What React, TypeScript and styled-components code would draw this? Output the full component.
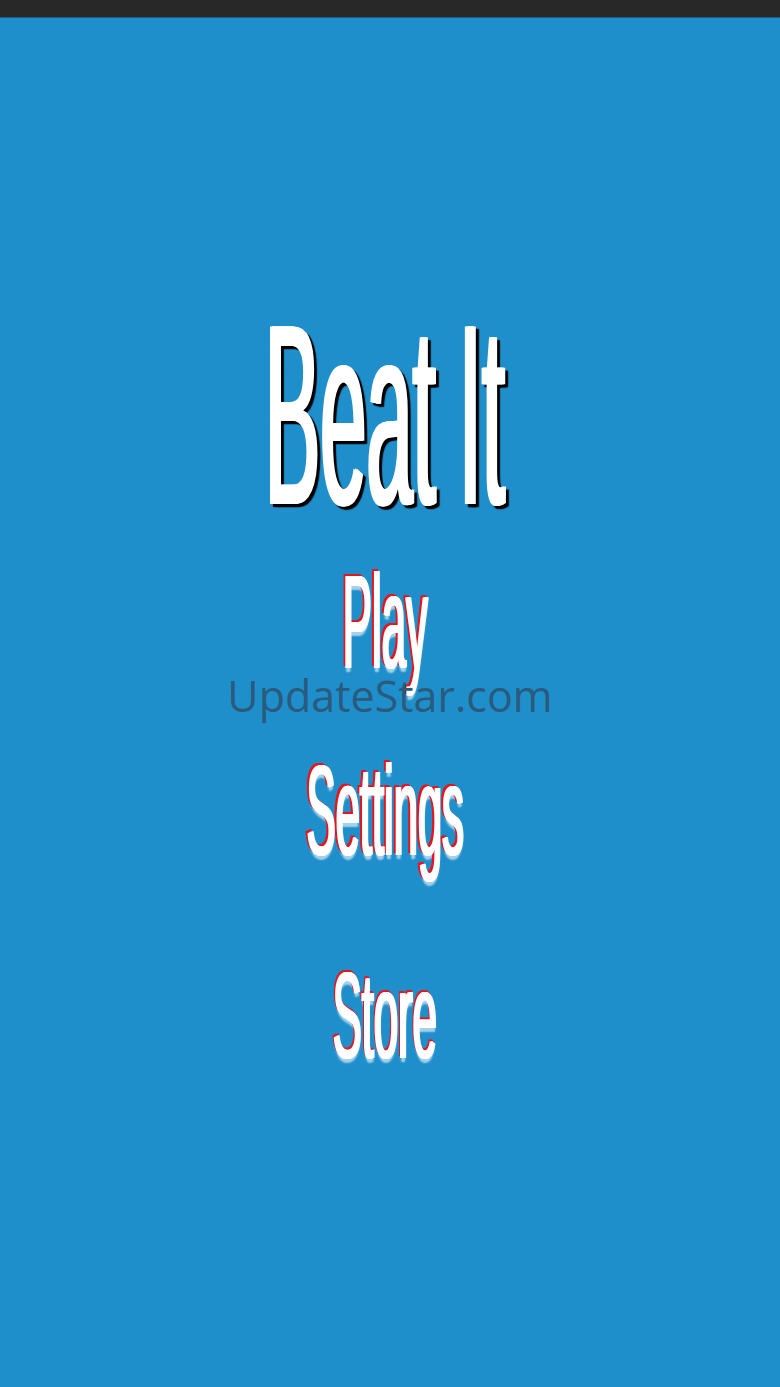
import React, { FC } from "react";
import styled, { createGlobalStyle } from "styled-components";

const GlobalStyle = createGlobalStyle`
  html, body {
    margin: 0;
    padding: 0;
    background: #1f8fcc;
    overflow: hidden;
  }
`;

const menu = [
  { label: "Play", fs: 134, sx: 0.326, mt: 11, shadowX: -6 },
  { label: "Settings", fs: 128, sx: 0.34, mt: 58, shadowX: -6 },
  { label: "Store", fs: 122, sx: 0.357, mt: 80, shadowX: -3 },
];

// horizontal copies of a glyph, so the squeezed strokes read a little thicker
const smear = (dx: number, dy: number, color: string, step: number, blur = 0) =>
  [-1, 0, 1]
    .map((k) => `${dx + k * step}px ${dy}px ${blur}px ${color}`)
    .join(", ");

const App: FC = () => {
  return (
    <>
      <GlobalStyle />
      <Screen>
        <StatusBar />
        <Stage>
          <Title>Beat It</Title>
          {menu.map((item) => (
            <MenuItem
              key={item.label}
              $fs={item.fs}
              $sx={item.sx}
              $mt={item.mt}
              $shadowX={item.shadowX}
            >
              {item.label}
            </MenuItem>
          ))}
          <Watermark>UpdateStar.com</Watermark>
        </Stage>
      </Screen>
    </>
  );
};

export default App;

const Screen = styled.div`
  width: 780px;
  height: 1387px;
  display: flex;
  flex-direction: column;
  background: #1f8fcc;
`;

const StatusBar = styled.div`
  height: 18px;
  flex-shrink: 0;
  background: #282828;
  border-bottom: 1px solid #1c5f85;
  box-sizing: border-box;
`;

const Stage = styled.div`
  position: relative;
  flex: 1;
  display: flex;
  flex-direction: column;
  align-items: center;
  padding-top: 268px;
  padding-right: 10px;
  overflow: hidden;
  font-family: "Liberation Sans", Arial, sans-serif;
`;

const Title = styled.div`
  font-size: 258px;
  line-height: 258px;
  height: 258px;
  color: #ffffff;
  white-space: nowrap;
  transform: scaleX(0.322);
  text-shadow: ${smear(0, 0, "#ffffff", 5)}, ${smear(9, 3, "#000000", 5, 2)};
`;

const MenuItem = styled.div<{
  $fs: number;
  $sx: number;
  $mt: number;
  $shadowX: number;
}>`
  margin-top: ${(p) => p.$mt}px;
  font-size: ${(p) => p.$fs}px;
  line-height: ${(p) => p.$fs}px;
  height: ${(p) => p.$fs}px;
  color: #ffffff;
  white-space: nowrap;
  transform: scaleX(${(p) => p.$sx});
  text-shadow: ${smear(0, 0, "#ffffff", 3)},
    ${(p) => smear(p.$shadowX, -2, "#e8141c", 3)},
    0 4px 3px rgba(255, 255, 255, 0.6);
`;

const Watermark = styled.div`
  position: absolute;
  top: 656px;
  left: 0;
  right: 0;
  text-align: center;
  font-family: "Open Sans", "Noto Sans", sans-serif;
  font-size: 43px;
  line-height: 43px;
  color: #2a5a7c;
  pointer-events: none;
`;
